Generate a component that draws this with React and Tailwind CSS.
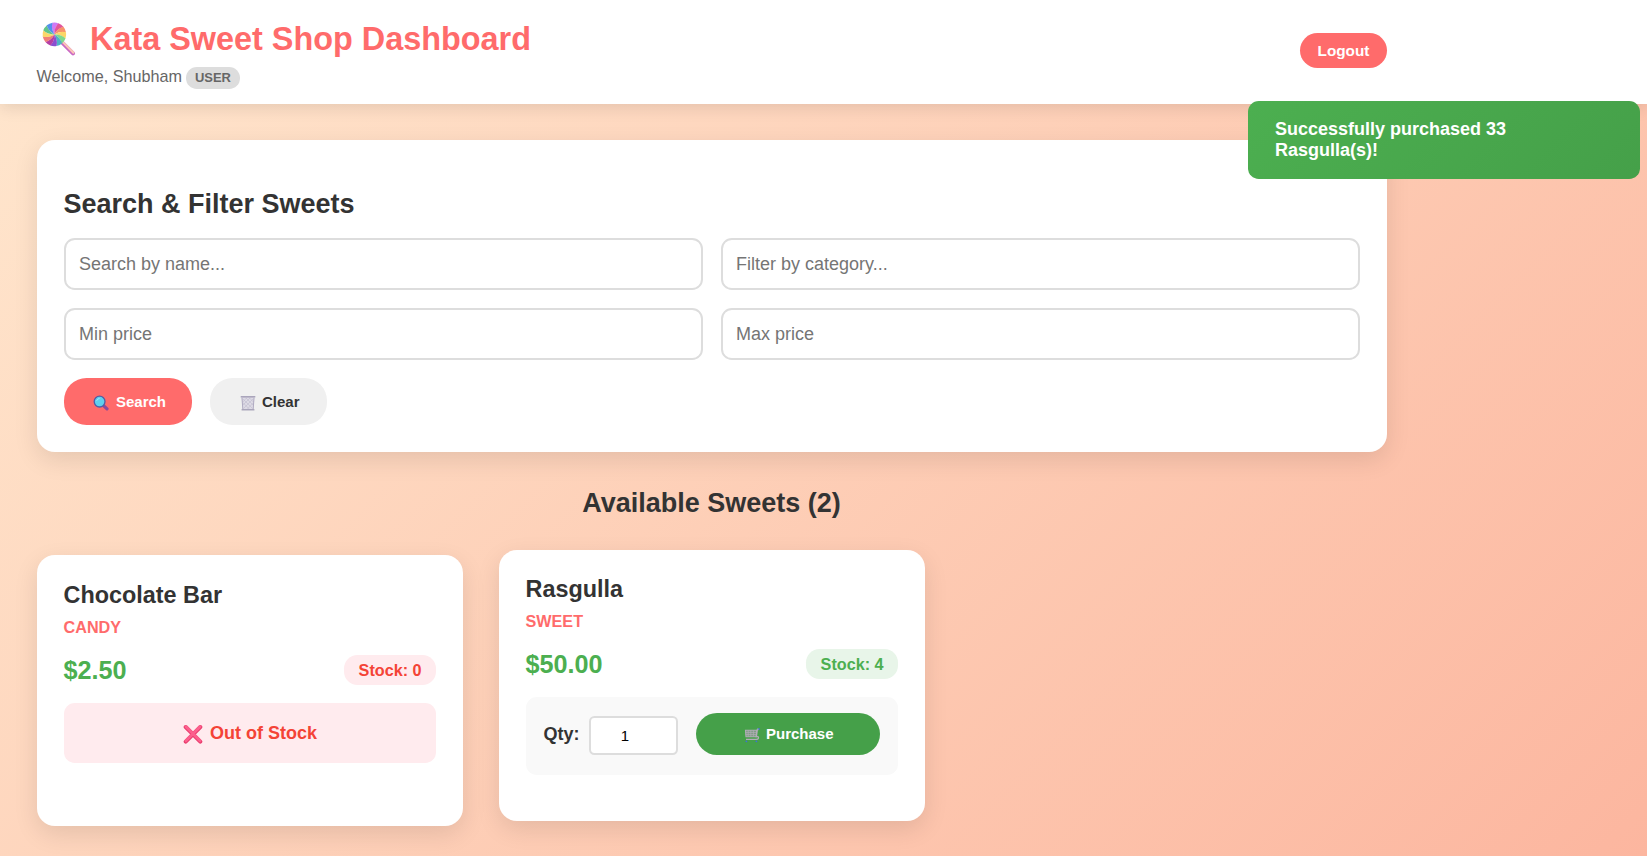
import React from "react";

function Lollipop() {
  const colors = ["#d07af5", "#e3559b", "#f7936b", "#fcd667", "#7fd98c", "#4fb3c4", "#8a4fd0", "#b53fa4", "#f07f78", "#fbd768", "#63c48a", "#5490ec"];
  const point = (deg, r) => {
    const a = (deg * Math.PI) / 180;
    return `${12.4 + r * Math.cos(a)} ${12.4 + r * Math.sin(a)}`;
  };
  return (
    <svg className="h-[34px] w-[34px] shrink-0" viewBox="0 0 34 34">
      <path d="M20 20.4 L31 31.4" stroke="#c968c4" strokeWidth="4" strokeLinecap="round" />
      <path d="M20.8 20 L31.4 30.6" stroke="#fbc4b6" strokeWidth="2.2" strokeLinecap="round" />
      {colors.map((c, i) => {
        const a = i * 30 - 100;
        return (
          <path
            key={i}
            fill={c}
            d={`M12.4 12.4 Q${point(a - 22, 7)} ${point(a, 11.8)} A11.8 11.8 0 0 1 ${point(a + 31, 11.8)} Q${point(a + 9, 7)} 12.4 12.4Z`}
          />
        );
      })}
    </svg>
  );
}

function Magnifier() {
  return (
    <svg className="h-4 w-4 shrink-0" viewBox="0 0 16 16">
      <path d="M10.8 10.8 L14 13.8" stroke="#8b4a9c" strokeWidth="3.2" strokeLinecap="round" />
      <circle cx="6.6" cy="6.6" r="5.4" fill="#5fd0ee" stroke="#4f5fa5" strokeWidth="1.3" />
      <path d="M3.6 5.8 Q4.4 3.7 6.6 3.4" stroke="#a5e8fa" strokeWidth="1" fill="none" />
    </svg>
  );
}

function Basket() {
  return (
    <svg className="h-4 w-4 shrink-0" viewBox="0 0 16 16">
      <path d="M1.5 2 H14.5 L13.4 14.5 H2.6Z" fill="#dddae5" />
      <path d="M3 4 L12.5 13.5 M6 3 L13 10 M9.5 3 L13.5 7 M2.8 7.5 L9 13.8 M13 4 L3.5 13.5 M10 3 L3 10 M6.5 3 L2.8 7 M13.2 8 L7.5 13.8" stroke="#c0bccd" strokeWidth="0.6" />
      <path d="M0.7 1.8 H15.3" stroke="#a6a1b8" strokeWidth="1.5" />
      <path d="M2 3 L2.8 14 M14 3 L13.2 14" stroke="#aaa5bd" strokeWidth="0.9" />
      <path d="M1.6 14.8 H14.4" stroke="#9a95ae" strokeWidth="1.2" />
    </svg>
  );
}

function Cross() {
  return (
    <svg className="h-5 w-5 shrink-0" viewBox="0 0 20 20">
      <path d="M2.7 3 L17.3 17.6 M17.3 3 L2.7 17.6" stroke="#e83a6b" strokeWidth="4" strokeLinecap="round" />
      <path d="M3 2.8 L17 16.8 M17 2.8 L3 16.8" stroke="#fc5f8c" strokeWidth="3" strokeLinecap="round" />
    </svg>
  );
}

function Cart() {
  return (
    <svg className="h-4 w-4 shrink-0" viewBox="0 0 16 16" fill="none">
      <path d="M1.5 3.2 H12.8 L12.2 9.8 H2Z" fill="#7f9d83" stroke="#b3adb9" strokeWidth="1.1" />
      <path d="M1.5 5.4 H12.6 M1.6 7.6 H12.4 M4.2 3.2 V9.6 M6.8 3.2 V9.6 M9.4 3.2 V9.6" stroke="#b3adb9" strokeWidth="0.7" />
      <path d="M14.6 2.4 L13.2 3 L12.4 9.6 Q14.9 9.2 14.4 11.2 Q14 12.4 12.2 12.4 H2" stroke="#b3adb9" strokeWidth="1.3" />
      <path d="M13 2.2 H15" stroke="#9aa0c0" strokeWidth="1.2" />
      <circle cx="15" cy="1.9" r="0.8" fill="#3f6fd8" />
      <circle cx="2.4" cy="14.3" r="0.9" fill="#3f6fd8" />
      <circle cx="12.4" cy="14.3" r="0.9" fill="#3f6fd8" />
    </svg>
  );
}

function Field({ placeholder }) {
  return (
    <input
      placeholder={placeholder}
      className="h-[52px] w-full rounded-[10.8px] border-2 border-[#ddd] bg-white px-[13px] text-[18px] placeholder:text-[#757575]"
    />
  );
}

function SweetCard({ name, category, price, stock, raised, children }) {
  return (
    <article
      className={
        "h-[271px] rounded-[18px] bg-white px-[27px] pb-[27px] shadow-[0_8px_25px_rgba(0,0,0,0.1)] " +
        (raised ? "-mt-[5.5px] pt-[26.5px]" : "pt-[27px]")
      }
    >
      <h3 className="-ml-[0.5px] text-[23.4px] leading-[27px] font-bold text-[#333]">{name}</h3>
      <p className="mt-[9px] -ml-[0.5px] text-[16.2px] leading-[19px] font-bold text-[#ff6b6b] uppercase">{category}</p>
      <div className="mt-[18px] flex h-[30px] items-center justify-between">
        <span className="-ml-[0.5px] text-[25.2px] leading-[30px] font-bold text-[#4caf50]">{price}</span>
        <span
          className={
            "flex h-[30px] items-center rounded-[13.5px] px-[14.4px] text-[16.2px] font-bold " +
            (stock > 0 ? "bg-[#e8f5e9] text-[#4caf50]" : "bg-[#ffebee] text-[#f44336]")
          }
        >
          Stock: {stock}
        </span>
      </div>
      {children}
    </article>
  );
}

export default function App() {
  return (
    <div className="h-screen overflow-hidden bg-[linear-gradient(135deg,#ffe7ce_0%,#fcb69f_100%)] font-['Liberation_Sans',Arial,sans-serif] text-[#333]">
      <header className="h-[104px] bg-white pl-[37px] shadow-[0_4px_15px_rgba(0,0,0,0.1)]">
        <div className="flex w-[1350px] items-start justify-between">
          <div className="pt-[20px]">
            <h1 className="flex h-[38px] items-center pl-[5px] text-[32.4px] font-bold text-[#ff6b6b]">
              <Lollipop />
              <span className="ml-[14px]">Kata Sweet Shop Dashboard</span>
            </h1>
            <p className="mt-[9px] -ml-[0.5px] flex items-start text-[16.2px] leading-[19px] text-[#666]">
              <span>Welcome, Shubham</span>
              <span className="ml-[4px] h-[22px] rounded-[10.8px] bg-[#ddd] px-[9px] text-[12.96px] leading-[22px] font-bold">USER</span>
            </p>
          </div>
          <button className="mt-[33px] h-[35px] w-[87px] rounded-[18px] bg-[#ff6b6b] pt-px text-[15.3px] font-bold text-white">Logout</button>
        </div>
      </header>

      <div className="fixed top-[101px] right-[7px] z-10 h-[78px] w-[392px] rounded-[10.8px] bg-[linear-gradient(135deg,#4caf50,#45a049)] pt-[18px] pr-[90px] pl-[27px] text-[18px] leading-[21px] font-bold text-white">
        Successfully purchased 33 Rasgulla(s)!
      </div>

      <main className="ml-[37px] w-[1350px] pt-[36px]">
        <section className="h-[312px] rounded-[18px] bg-white px-[27px] pt-[48px] shadow-[0_8px_25px_rgba(0,0,0,0.1)]">
          <h2 className="-ml-[0.5px] text-[27px] leading-[32px] font-bold">Search &amp; Filter Sweets</h2>
          <div className="mt-[18px] grid grid-cols-2 gap-[18px]">
            <Field placeholder="Search by name..." />
            <Field placeholder="Filter by category..." />
            <Field placeholder="Min price" />
            <Field placeholder="Max price" />
          </div>
          <div className="mt-[18px] flex gap-[18px]">
            <button className="flex h-[47px] w-[128px] items-center rounded-[22.5px] bg-[#ff6b6b] pt-[2px] pl-[29px] text-[15px] font-bold text-white">
              <Magnifier />
              <span className="ml-[7px]">Search</span>
            </button>
            <button className="flex h-[47px] w-[117px] items-center rounded-[22.5px] bg-[#f0f0f0] pt-[2px] pl-[30px] text-[15px] font-bold text-[#333]">
              <Basket />
              <span className="ml-[6px]">Clear</span>
            </button>
          </div>
        </section>

        <h2 className="mt-[35px] pr-px text-center text-[27px] leading-[32px] font-bold">Available Sweets (2)</h2>

        <section className="mt-[36px] grid grid-cols-3 gap-[36px]">
          <SweetCard name="Chocolate Bar" category="Candy" price="$2.50" stock={0}>
            <div className="mt-[18px] flex h-[60px] items-center justify-center rounded-[10.8px] bg-[#ffebee] pt-px text-[18px] font-bold text-[#f44336]">
              <Cross />
              <span className="ml-[7px]">Out of Stock</span>
            </div>
          </SweetCard>
          <SweetCard name="Rasgulla" category="Sweet" price="$50.00" stock={4} raised>
            <div className="mt-[18px] flex h-[78px] items-start rounded-[10.8px] bg-[#f9f9f9] px-[18px] pt-[16px]">
              <span className="mt-[11px] -ml-[0.5px] w-[45.5px] text-[18px] leading-[21px] font-bold whitespace-nowrap">Qty:</span>
              <input
                defaultValue="1"
                className="mt-[3px] h-[39px] w-[89px] rounded-[5.4px] border-2 border-[#ddd] bg-white pr-[17px] text-center text-[15px] text-black"
              />
              <button className="ml-[18px] flex h-[42px] w-[184px] items-center rounded-[21px] bg-[#45a049] pt-px pl-[48px] text-[15px] font-bold text-white">
                <Cart />
                <span className="ml-[6px]">Purchase</span>
              </button>
            </div>
          </SweetCard>
        </section>
      </main>
    </div>
  );
}
